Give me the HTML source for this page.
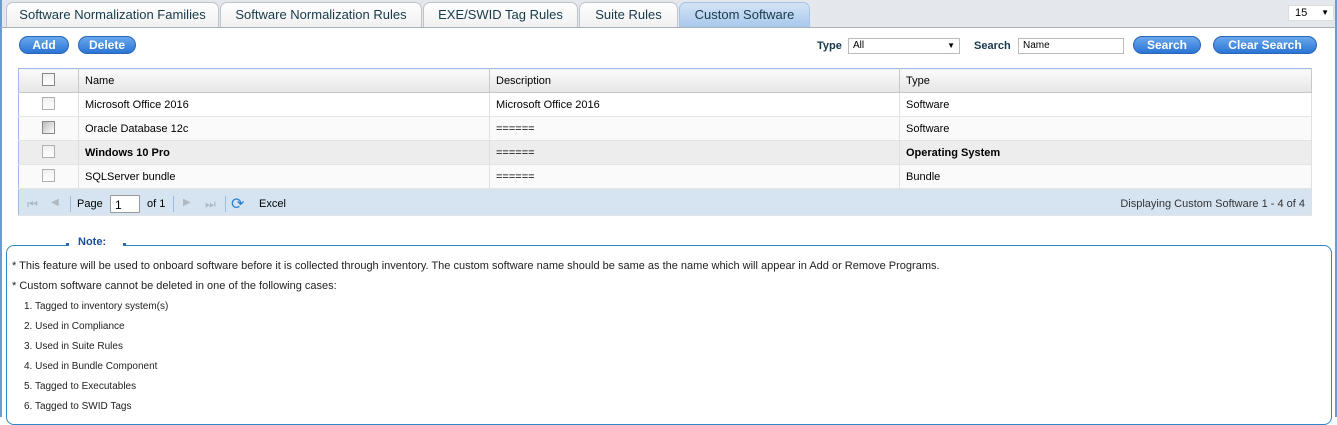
<!DOCTYPE html>
<html><head><style>
*{box-sizing:border-box;margin:0;padding:0}
body{width:1337px;height:417px;background:#fff;font-family:"Liberation Sans",sans-serif;font-size:11px;color:#000;position:relative;overflow:hidden}
.a{position:absolute}
.tabbar{left:0;top:0;width:1337px;height:28px;background:#e4e8ec;border-bottom:1px solid #a8b0b8;border-left:2px solid #6c9ad4;border-right:2px solid #6c9ad4}
.tab{top:2px;height:25px;background:linear-gradient(#fff,#f0f0f0);border:1px solid #c0c4c8;border-bottom:none;border-radius:7px 7px 0 0;font-size:13px;color:#173a4a;text-align:center;line-height:24px}
.tab.on{background:linear-gradient(#d4e4f6,#a8c8ec);border-color:#a8c4e4}
.btn{height:18px;border-radius:9px;background:linear-gradient(#6aa8ec,#2a74d4);border:1px solid #2a66b8;color:#fff;font-weight:bold;font-size:12px;text-align:center;line-height:16px}
.lbl{font-weight:bold;color:#173a4a;font-size:11px}
.inp{height:16px;border:1px solid #b8bcc0;font-size:10px;padding-left:4px;line-height:14px;background:#fff}
table{border-collapse:collapse;position:absolute;left:18px;top:68px;width:1294px;border:1px solid #9cbce4}
td{height:24px;border-right:1px solid #e0e0e0;border-bottom:1px solid #e4e4e4;padding-left:6px;font-size:11px}
th{height:24px;background:linear-gradient(#fafafa,#e6e6e6);border-right:1px solid #c8c8c8;border-bottom:1px solid #c8c8c8;text-align:left;font-weight:normal;padding-left:6px;font-size:11px}
.cb{display:inline-block;width:13px;height:13px;border:1px solid #b0b0b0;background:linear-gradient(#f0f0f0,#fff)}
.note{left:6px;top:245px;width:1326px;height:180px;border:1px solid #2c86c8;border-radius:8px}
.nl{font-size:10px;color:#222;position:absolute;left:12px}
.nl.b{font-size:11px}
</style></head><body>
<div class="a tabbar"></div>
<div class="a tab" style="left:6px;width:213px">Software Normalization Families</div>
<div class="a tab" style="left:220px;width:202px">Software Normalization Rules</div>
<div class="a tab" style="left:423px;width:155px">EXE/SWID Tag Rules</div>
<div class="a tab" style="left:579px;width:99px">Suite Rules</div>
<div class="a tab on" style="left:679px;width:131px">Custom Software</div>
<div class="a" style="left:1288px;top:5px;width:46px;height:16px;background:#fff;border:1px solid #ddd;font-size:11px;padding-left:6px;line-height:14px">15<span style="position:absolute;right:4px;font-size:8px">▼</span></div>
<div class="a" style="left:0;top:28px;width:2px;height:389px;background:#6c9ad4"></div>
<div class="a" style="left:1335px;top:28px;width:2px;height:389px;background:#6c9ad4"></div>

<div class="a btn" style="left:19px;top:36px;width:50px">Add</div>
<div class="a btn" style="left:78px;top:36px;width:58px">Delete</div>
<div class="a lbl" style="left:817px;top:40px">Type</div>
<div class="a inp" style="left:848px;top:38px;width:112px">All<span style="position:absolute;right:4px;font-size:8px">▼</span></div>
<div class="a lbl" style="left:974px;top:40px">Search</div>
<div class="a inp" style="left:1018px;top:38px;width:106px">Name</div>
<div class="a btn" style="left:1133px;top:36px;width:68px">Search</div>
<div class="a btn" style="left:1213px;top:36px;width:104px">Clear Search</div>

<table>
<tr><th style="width:60px;text-align:center;padding:0"><span class="cb" style="border-color:#888"></span></th><th style="width:411px">Name</th><th style="width:410px">Description</th><th>Type</th></tr>
<tr><td style="text-align:center;padding:0"><span class="cb"></span></td><td>Microsoft Office 2016</td><td>Microsoft Office 2016</td><td>Software</td></tr>
<tr style="background:#fafafa"><td style="text-align:center;padding:0"><span class="cb" style="border-color:#888;background:linear-gradient(135deg,#bbb,#fff)"></span></td><td>Oracle Database 12c</td><td>======</td><td>Software</td></tr>
<tr style="background:#ededed"><td style="text-align:center;padding:0"><span class="cb"></span></td><td><b>Windows 10 Pro</b></td><td>======</td><td><b>Operating System</b></td></tr>
<tr style="background:#fafafa"><td style="text-align:center;padding:0"><span class="cb"></span></td><td>SQLServer bundle</td><td>======</td><td>Bundle</td></tr>
<tr><td colspan="4" style="height:27px;background:#d6e4f2;padding:0;position:relative;border-top:1px solid #9cbce4">
<span class="a" style="left:8px;top:8px;color:#b0b8c0;font-size:12px">⏮</span>
<span class="a" style="left:32px;top:8px;color:#b0b8c0;font-size:10px">◀</span>
<span class="a" style="left:51px;top:7px;width:1px;height:16px;background:#9cbce4"></span>
<span class="a" style="left:58px;top:9px">Page</span>
<span class="a" style="left:91px;top:6px;width:30px;height:18px;background:#fff;border:1px solid #999;padding:2px 4px;font-size:12px">1</span>
<span class="a" style="left:128px;top:9px">of 1</span>
<span class="a" style="left:154px;top:7px;width:1px;height:16px;background:#9cbce4"></span>
<span class="a" style="left:164px;top:8px;color:#b0b8c0;font-size:10px">▶</span>
<span class="a" style="left:186px;top:8px;color:#b0b8c0;font-size:12px">⏭</span>
<span class="a" style="left:206px;top:7px;width:1px;height:16px;background:#9cbce4"></span>
<span class="a" style="left:212px;top:5px;color:#2a80d0;font-size:16px">⟳</span>
<span class="a" style="left:240px;top:9px">Excel</span>
<span class="a" style="right:6px;top:9px;color:#333">Displaying Custom Software 1 - 4 of 4</span>
</td></tr>
</table>

<div class="a note"></div>
<div class="a" style="left:66px;top:239px;width:58px;height:10px;background:#fff"></div>
<div class="a" style="left:66px;top:243px;width:3px;height:3px;background:#2c6aa8"></div>
<div class="a" style="left:123px;top:243px;width:3px;height:3px;background:#2c6aa8"></div>
<div class="a" style="left:78px;top:236px;font-weight:bold;color:#1c4ca0;font-size:11px">Note:</div>
<div class="nl b" style="top:260px">* This feature will be used to onboard software before it is collected through inventory. The custom software name should be same as the name which will appear in Add or Remove Programs.</div>
<div class="nl b" style="top:280px">* Custom software cannot be deleted in one of the following cases:</div>
<div class="nl" style="left:24px;top:301px">1. Tagged to inventory system(s)</div>
<div class="nl" style="left:24px;top:321px">2. Used in Compliance</div>
<div class="nl" style="left:24px;top:341px">3. Used in Suite Rules</div>
<div class="nl" style="left:24px;top:361px">4. Used in Bundle Component</div>
<div class="nl" style="left:24px;top:381px">5. Tagged to Executables</div>
<div class="nl" style="left:24px;top:401px">6. Tagged to SWID Tags</div>
</body></html>
